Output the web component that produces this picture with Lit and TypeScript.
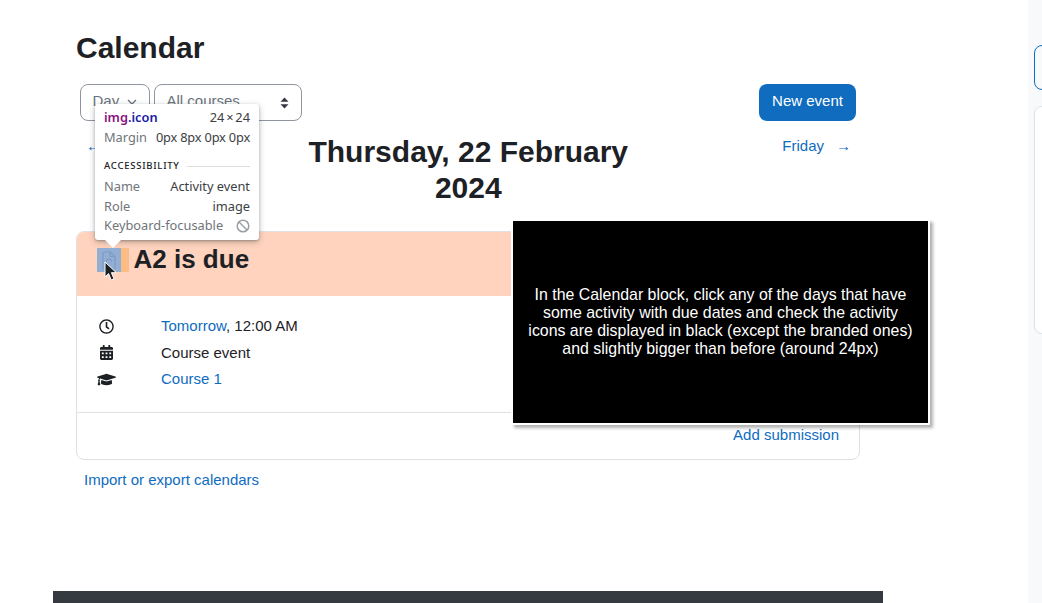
import { LitElement, html, css, svg } from "lit";
import { customElement } from "lit/decorators.js";

const clock = svg`<path d="M256 8C119 8 8 119 8 256s111 248 248 248 248-111 248-248S393 8 256 8zm0 448c-110.500 0-200-89.500-200-200S145.500 56 256 56s200 89.500 200 200-89.500 200-200 200zm61.800-104.400l-84.900-61.700c-3.100-2.300-4.900-5.900-4.900-9.700V116c0-6.600 5.400-12 12-12h32c6.600 0 12 5.400 12 12v141.700l66.800 48.600c5.400 3.900 6.500 11.400 2.600 16.800L334.600 349c-3.900 5.300-11.400 6.500-16.800 2.600z"/>`;
const calendar = svg`<path d="M0 464c0 26.500 21.500 48 48 48h352c26.500 0 48-21.500 48-48V192H0v272zm320-196c0-6.600 5.400-12 12-12h40c6.600 0 12 5.400 12 12v40c0 6.600-5.400 12-12 12h-40c-6.600 0-12-5.400-12-12v-40zm0 128c0-6.600 5.400-12 12-12h40c6.600 0 12 5.400 12 12v40c0 6.600-5.400 12-12 12h-40c-6.600 0-12-5.400-12-12v-40zM192 268c0-6.600 5.400-12 12-12h40c6.600 0 12 5.400 12 12v40c0 6.600-5.400 12-12 12h-40c-6.600 0-12-5.400-12-12v-40zm0 128c0-6.600 5.400-12 12-12h40c6.600 0 12 5.400 12 12v40c0 6.600-5.400 12-12 12h-40c-6.600 0-12-5.400-12-12v-40zM64 268c0-6.600 5.400-12 12-12h40c6.600 0 12 5.400 12 12v40c0 6.600-5.400 12-12 12H76c-6.600 0-12-5.400-12-12v-40zm0 128c0-6.600 5.400-12 12-12h40c6.600 0 12 5.400 12 12v40c0 6.600-5.400 12-12 12H76c-6.600 0-12-5.400-12-12v-40zM400 64h-48V16c0-8.800-7.200-16-16-16h-32c-8.800 0-16 7.200-16 16v48H160V16c0-8.800-7.200-16-16-16h-32c-8.800 0-16 7.200-16 16v48H48C21.500 64 0 85.500 0 112v48h448v-48c0-26.500-21.500-48-48-48z"/>`;
const cap = svg`<path d="M622.340 153.200L343.400 67.500c-15.200-4.670-31.600-4.670-46.790 0L17.660 153.200c-23.540 7.230-23.540 38.360 0 45.590l48.630 14.940c-10.670 13.190-17.230 29.280-17.880 46.900C38.780 266.150 32 276.110 32 288c0 10.780 5.680 19.850 13.860 25.650L20.330 428.530C18.110 438.520 25.710 448 35.940 448h56.110c10.240 0 17.840-9.480 15.620-19.470L82.140 313.650C90.320 307.850 96 298.780 96 288c0-11.570-6.470-21.250-15.660-26.870.76-15.020 8.440-28.300 20.690-36.720L296.600 285.500c9.060 2.780 26.440 6.250 46.790 0l278.950-85.700c23.550-7.240 23.550-38.370 0-45.600zM352.790 315.090c-28.530 8.760-52.840 3.920-65.590 0l-145.020-44.550L128 384c0 35.350 85.960 64 192 64s192-28.650 192-64l-14.180-113.470-145.030 44.560z"/>`;

@customElement("app-root")
export class AppRoot extends LitElement {
  static styles = css`
    :host {
      display: block;
      font-family: "Liberation Sans", Arial, sans-serif;
      font-size: 15px;
      line-height: 22.5px;
      color: #1d2125;
    }
    * { box-sizing: border-box; }
    a { color: #0f6cbf; text-decoration: none; }
    .page {
      position: relative;
      display: flex;
      height: 603px;
      overflow: hidden;
      background: #fff;
    }
    .main {
      width: 1028px;
      flex: none;
      padding-left: 53px;
      display: flex;
      flex-direction: column;
    }
    .column {
      width: 830px;
      flex: 1;
      display: flex;
      flex-direction: column;
      padding: 31px 23px 0;
    }
    h1 {
      margin: 0;
      font-size: 30px;
      line-height: 34px;
      font-weight: 700;
    }
    .controls {
      display: flex;
      gap: 4px;
      margin: 19px 4px 0;
      height: 37px;
    }
    .select {
      display: flex;
      align-items: center;
      justify-content: space-between;
      border: 1px solid #8f959e;
      border-radius: 8px;
      padding: 0 12px;
      color: #6a737b;
      background: #fff;
    }
    .select span { margin: 0 0 2px -0.5px; }
    .select.day { width: 70px; }
    .select.day svg { margin-bottom: 1px; }
    .select.courses { width: 148px; }
    .button {
      margin-left: auto;
      width: 97px;
      display: flex;
      align-items: center;
      justify-content: center;
      padding-bottom: 2px;
      background: #0f6cbf;
      color: #fff;
      border-radius: 8px;
    }
    .nav {
      display: flex;
      align-items: flex-start;
      margin: 12px 0 0;
      padding: 0 9px 0 10px;
    }
    .nav-side {
      flex: 1;
      display: flex;
      gap: 13px;
      margin-top: 2px;
      white-space: nowrap;
    }
    .nav-side.end { justify-content: flex-end; gap: 12px; }
    h2 {
      flex: none;
      width: 340px;
      margin: 0.5px 0 0 -0.5px;
      text-align: center;
      font-size: 30px;
      line-height: 36px;
      font-weight: 700;
    }
    .card {
      margin-top: 25.5px;
      border: 1px solid #dee2e6;
      border-radius: 8px;
      overflow: hidden;
    }
    .card-head {
      height: 64px;
      background: #ffd3bd;
      padding: 0 0 9px 20px;
      display: flex;
      align-items: center;
    }
    .hl {
      display: flex;
      width: 32px;
      height: 24px;
      margin: 1px 4.500px 0 0;
      background: #fbbd85;
    }
    .hl svg { display: block; }
    h3 {
      margin: 0 0 2px;
      font-size: 26px;
      line-height: 32px;
      font-weight: 700;
    }
    .card-body {
      height: 116px;
      padding: 19px 20px 0;
      display: grid;
      grid-template-columns: 19px 1fr;
      column-gap: 45px;
      row-gap: 4px;
      align-content: start;
    }
    .ic {
      display: flex;
      align-items: center;
      justify-content: center;
      height: 22.5px;
    }
    .ic svg { display: block; fill: #1d2125; }
    .card-foot {
      border-top: 1px solid #dee2e6;
      height: 47px;
      padding: 11px 20px 0;
      text-align: right;
    }
    .import { margin: 9px 0 0 8px; }
    .footer {
      width: 830px;
      flex: 0 0 12px;
      background: #343a40;
    }
    .drawer {
      flex: 1;
      background: #f8f9fa;
      padding: 45px 0 0 6px;
      display: flex;
      flex-direction: column;
      gap: 16px;
      overflow: hidden;
    }
    .drawer div {
      width: 60px;
      background: #fff;
      border-radius: 8px;
    }
    .drawer .search { height: 45px; border: 1px solid #0f6cbf; background: #f8f9fa; }
    .drawer .block { height: 228px; border: 1px solid #dee2e6; }

    .tip {
      position: absolute;
      left: 95px;
      top: 104px;
      width: 164px;
      height: 136px;
      padding: 4px 9px 0;
      background: #fff;
      border-radius: 3px;
      box-shadow: 0 2px 6px rgba(60, 64, 67, 0.35), 0 1px 2px rgba(60, 64, 67, 0.3);
      font-family: "Noto Sans", sans-serif;
      font-size: 12.8px;
      line-height: 19.5px;
      color: #3c4043;
    }
    .tip::after {
      content: "";
      position: absolute;
      left: 10px;
      top: 136px;
      border: 8px solid transparent;
      border-top-color: #fff;
      border-bottom: 0;
    }
    .tip-row {
      display: flex;
      justify-content: space-between;
      align-items: center;
      white-space: nowrap;
      height: 19.5px;
    }
    .tip-row .k { color: #70757a; }
    .tip-row .v { color: #3c4043; }
    .tip-row .v.tight { letter-spacing: -0.18px; }
    .tip-row .v.size { word-spacing: -1.5px; }
    .sel { font-weight: 600; }
    .sel b { font-weight: 600; color: #881280; }
    .sel i { font-style: normal; color: #1a1aa6; }
    .a11y {
      display: flex;
      align-items: center;
      gap: 7px;
      font-size: 9.5px;
      font-weight: 500;
      letter-spacing: 0.75px;
      color: #202124;
      margin: 10px 0 2px;
      line-height: 18px;
    }
    .a11y span { flex: 1; height: 1px; background: #dadce0; }
    .tip-row svg { display: block; }

    .cursor { position: absolute; left: 104px; top: 261px; }

    .overlay {
      position: absolute;
      left: 511px;
      top: 219px;
      width: 419px;
      height: 206px;
      border: 2px solid #fff;
      background: #000;
      color: #fff;
      box-shadow: 3px 3px 3px rgba(0, 0, 0, 0.3);
      display: flex;
      align-items: center;
      padding: 0 12px;
      text-align: center;
      font-size: 15.9px;
      line-height: 18px;
    }
  `;

  render() {
    return html`
      <div class="page">
        <div class="main">
          <div class="column">
            <h1>Calendar</h1>
            <div class="controls">
              <div class="select day">
                <span>Day</span>
                <svg width="10" height="6" viewBox="0 0 10 6"><path d="M1 1l4 4 4-4" fill="none" stroke="#6a737b" stroke-width="1.300"/></svg>
              </div>
              <div class="select courses">
                <span>All courses</span>
                <svg width="9" height="12" viewBox="0 0 9 12"><path d="M4.500 0.500L8.500 4.800H0.500zM4.500 11.500L0.500 7.200H8.500z" fill="#343a40"/></svg>
              </div>
              <a class="button">New event</a>
            </div>
            <div class="nav">
              <div class="nav-side"><a>←</a></div>
              <h2>Thursday, 22 February 2024</h2>
              <div class="nav-side end"><a>Friday</a><a>→</a></div>
            </div>
            <div class="card">
              <div class="card-head">
                <div class="hl">
                  <svg width="24" height="24" viewBox="0 0 24 24" style="background:#92aed3">
                    <path d="M6 5.500a1.500 1.500 0 0 1 1.500-1.500h6L18 8.500v11a1.500 1.500 0 0 1-1.500 1.500h-9A1.500 1.500 0 0 1 6 19.500z" fill="none" stroke="#7d9cc4" stroke-width="1.200"/>
                    <path d="M9.500 13.500a2.500 2.500 0 0 1 5 0M13 4v4.500h5" fill="none" stroke="#7d9cc4" stroke-width="1.200"/>
                  </svg>
                </div>
                <h3>A2 is due</h3>
              </div>
              <div class="card-body">
                <div class="ic"><svg width="15" height="15" viewBox="0 0 512 512">${clock}</svg></div>
                <div><a>Tomorrow</a>, 12:00 AM</div>
                <div class="ic"><svg width="13" height="15" viewBox="0 0 448 512">${calendar}</svg></div>
                <div>Course event</div>
                <div class="ic"><svg width="19" height="15" viewBox="0 0 640 512">${cap}</svg></div>
                <div><a>Course 1</a></div>
              </div>
              <div class="card-foot"><a>Add submission</a></div>
            </div>
            <a class="import">Import or export calendars</a>
          </div>
          <div class="footer"></div>
        </div>
        <div class="drawer">
          <div class="search"></div>
          <div class="block"></div>
        </div>

        <div class="tip">
          <div class="tip-row"><span class="sel"><b>img</b><i>.icon</i></span><span class="v size">24 × 24</span></div>
          <div class="tip-row"><span class="k">Margin</span><span class="v tight">0px 8px 0px 0px</span></div>
          <div class="a11y">ACCESSIBILITY<span></span></div>
          <div class="tip-row"><span class="k">Name</span><span class="v">Activity event</span></div>
          <div class="tip-row"><span class="k">Role</span><span class="v">image</span></div>
          <div class="tip-row"><span class="k">Keyboard-focusable</span>
            <svg width="14" height="14" viewBox="0 0 14 14" fill="none" stroke="#9aa0a6" stroke-width="1.500"><circle cx="7" cy="7" r="5.800"/><path d="M3 3l8 8"/></svg>
          </div>
        </div>

        <svg class="cursor" width="13" height="20" viewBox="0 0 13 20">
          <path d="M1 1v15l3.600-3.400 2.600 6.400 2.800-1.200-2.600-6.100h5z" fill="#1d2125" stroke="#fff" stroke-width="1"/>
        </svg>

        <div class="overlay">
          In the Calendar block, click any of the days that have some activity with due dates and check the activity icons are displayed in black (except the branded ones) and slightly bigger than before (around 24px)
        </div>
      </div>
    `;
  }
}
